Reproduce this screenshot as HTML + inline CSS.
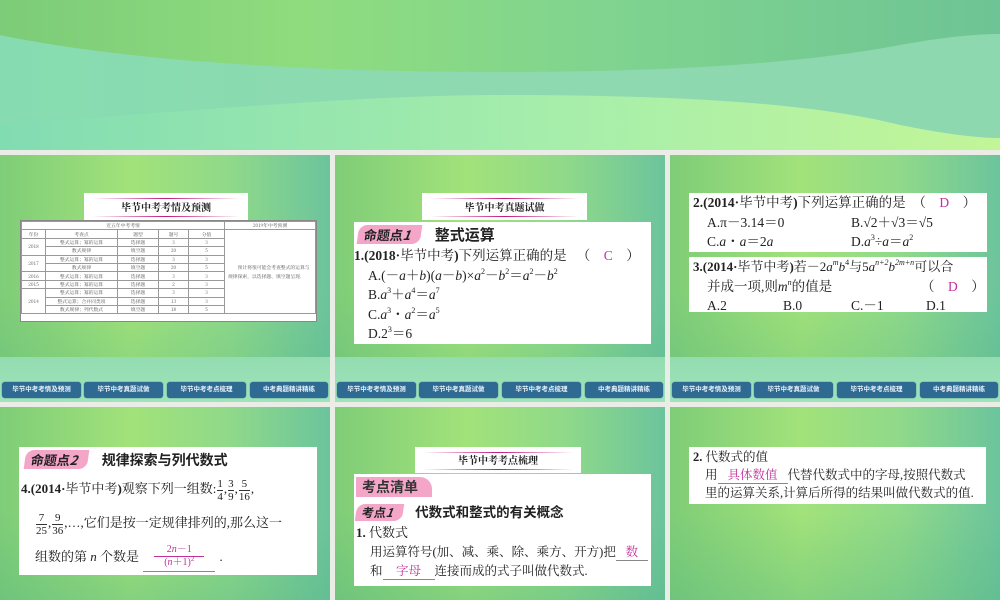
<!DOCTYPE html>
<html><head><meta charset="utf-8"><style>
*{margin:0;padding:0;box-sizing:border-box}
body{width:1000px;height:600px;overflow:hidden;background:#e9ede6;position:relative;font-family:"Liberation Serif","Noto Serif CJK SC",serif;color:#222}
.top{position:absolute;left:0;top:0;width:1000px;height:150px;overflow:hidden;background:linear-gradient(90deg,#7ccb78,#8fdc7e 30%,#80d48f 60%,#6ec494)}
.s{position:absolute;overflow:hidden;background:linear-gradient(90deg,#7fcd78 0%,#a2e27a 40%,#8fd98a 70%,#6cc49c 100%)}
.s::after{content:"";position:absolute;left:0;right:0;bottom:0;height:45%;background:linear-gradient(180deg,rgba(90,190,130,0),rgba(80,180,130,.35))}
.band{position:absolute;left:0;right:0;bottom:0;height:45px;background:linear-gradient(180deg,#93dcb0,#9fe3bc);z-index:1}
.nav{position:absolute;bottom:4px;height:16px;background:#2e6a92;border-radius:3px;color:#e8f2fa;font:bold 6.5px "Liberation Sans","Noto Sans CJK SC",sans-serif;text-align:center;line-height:16px;z-index:2;box-shadow:0 0 1px #1c4a6a}
.w{position:absolute;background:#fff;z-index:2}
.hd{position:absolute;background:#fff;z-index:2;text-align:center;font:bold 10px "Noto Serif CJK SC",serif;border-top:2px solid #fff}
.hd::before,.hd::after{content:"";position:absolute;left:8px;right:8px;height:1px;background:linear-gradient(90deg,transparent,#c2187a,transparent)}
.hd::before{top:3px}.hd::after{bottom:3px}
.tag{display:inline-block;background:#f3a6c8;color:#222;font:bold 13px "Noto Sans CJK SC",sans-serif;padding:0 10px 0 6px;border-radius:8px 0 8px 0;transform:skewX(-8deg)}
.t{font-size:13.5px;line-height:19.5px;white-space:nowrap;position:relative}
.p{color:#c0309a}
table{border-collapse:collapse;font-size:4.8px;font-family:"Noto Serif CJK SC",serif;color:#555;width:100%}
td{border:1px solid #999;text-align:center;height:8.4px;line-height:7px;padding:0}
sup{font-size:8px;line-height:0;vertical-align:6px}
.fr{display:inline-block;vertical-align:middle;text-align:center;font-size:11px;line-height:12px;margin:0 1px}
.fr span{display:block;border-top:1px solid #333}
</style></head><body>
<div class="top">
<svg width="1000" height="150" style="position:absolute;left:0;top:0">
<defs><linearGradient id="g1" x1="0" x2="1"><stop offset="0" stop-color="#86dcb0"/><stop offset=".5" stop-color="#8fd9b0"/><stop offset="1" stop-color="#8ed8b0"/></linearGradient>
<linearGradient id="g2" x1="0" x2="1"><stop offset="0" stop-color="#82dcb2"/><stop offset=".6" stop-color="#a9efaa"/><stop offset="1" stop-color="#c2f598"/></linearGradient></defs>
<path d="M0 35 C120 60 300 72 500 72 C700 72 820 60 900 45 C950 36 980 34 1000 34 L1000 150 L0 150Z" fill="url(#g1)"/>
<path d="M0 124 C150 115 350 95 500 95 C700 95 820 105 900 125 C950 135 980 138 1000 138 L1000 150 L0 150Z" fill="url(#g2)"/>
</svg></div>

<!-- slide 1 -->
<div class="s" style="left:0;top:155px;width:330px;height:247px">
<div class="band"></div>
<div class="hd" style="left:84px;top:38px;width:164px;height:27px;line-height:23px">毕节中考考情及预测</div>
<div class="w" style="left:20px;top:65px;width:297px;height:102px;border:1px solid #888">
<table>
<tr><td colspan="5">近五年中考考情</td><td>2019年中考预测</td></tr>
<tr><td style="width:24px">年份</td><td style="width:72px">考查点</td><td style="width:41px">题型</td><td style="width:30px">题号</td><td style="width:36px">分值</td><td rowspan="10" style="text-align:left;padding:0 3px;line-height:9px">　　预计将很可能会考查整式的运算与规律探索，以选择题、填空题呈现.</td></tr>
<tr><td rowspan="2">2018</td><td>整式运算；幂的运算</td><td>选择题</td><td>3</td><td>3</td></tr>
<tr><td>数式规律</td><td>填空题</td><td>20</td><td>5</td></tr>
<tr><td rowspan="2">2017</td><td>整式运算；幂的运算</td><td>选择题</td><td>3</td><td>3</td></tr>
<tr><td>数式规律</td><td>填空题</td><td>20</td><td>5</td></tr>
<tr><td>2016</td><td>整式运算；幂的运算</td><td>选择题</td><td>3</td><td>3</td></tr>
<tr><td>2015</td><td>整式运算；幂的运算</td><td>选择题</td><td>2</td><td>3</td></tr>
<tr><td rowspan="3">2014</td><td>整式运算；幂的运算</td><td>选择题</td><td>3</td><td>3</td></tr>
<tr><td>整式运算；合并同类项</td><td>选择题</td><td>13</td><td>3</td></tr>
<tr><td>数式规律；列代数式</td><td>填空题</td><td>18</td><td>5</td></tr>
</table></div>
<div class="nav" style="left:2px;width:79px">毕节中考考情及预测</div>
<div class="nav" style="left:84px;width:79px">毕节中考真题试做</div>
<div class="nav" style="left:167px;width:79px">毕节中考考点梳理</div>
<div class="nav" style="left:250px;width:78px">中考典题精讲精练</div>
</div>

<!-- slide 2 -->
<div class="s" style="left:335px;top:155px;width:330px;height:247px">
<div class="band"></div>
<div class="hd" style="left:87px;top:38px;width:165px;height:27px;line-height:23px">毕节中考真题试做</div>
<div class="w" style="left:19px;top:67px;width:297px;height:122px;padding:2px 0 0 0">
<div style="height:22px;white-space:nowrap"><span class="tag" style="margin-left:4px">命题点<i>1</i></span><span style="font:bold 15px 'Noto Sans CJK SC',sans-serif;margin-left:14px">整式运算</span></div>
<div class="t"><b>1.(2018·</b>毕节中考<b>)</b>下列运算正确的是 　（　<span class="p">C</span>　）</div>
<div class="t" style="padding-left:14px">A.(－<i>a</i>＋<i>b</i>)(<i>a</i>－<i>b</i>)×<i>a</i><sup>2</sup>－<i>b</i><sup>2</sup>＝<i>a</i><sup>2</sup>－<i>b</i><sup>2</sup></div>
<div class="t" style="padding-left:14px">B.<i>a</i><sup>3</sup>＋<i>a</i><sup>4</sup>＝<i>a</i><sup>7</sup></div>
<div class="t" style="padding-left:14px">C.<i>a</i><sup>3</sup>・<i>a</i><sup>2</sup>＝<i>a</i><sup>5</sup></div>
<div class="t" style="padding-left:14px">D.2<sup>3</sup>＝6</div>
</div>
<div class="nav" style="left:2px;width:79px">毕节中考考情及预测</div>
<div class="nav" style="left:84px;width:79px">毕节中考真题试做</div>
<div class="nav" style="left:167px;width:79px">毕节中考考点梳理</div>
<div class="nav" style="left:250px;width:78px">中考典题精讲精练</div>
</div>

<!-- slide 3 -->
<div class="s" style="left:670px;top:155px;width:330px;height:247px">
<div class="band"></div>
<div class="w" style="left:19px;top:38px;width:298px;height:59px;padding:0 0 0 4px">
<div class="t"><b>2.(2014·</b>毕节中考<b>)</b>下列运算正确的是　（　<span class="p">D</span>　）</div>
<div class="t" style="padding-left:14px">A.π－3.14＝0<span style="position:absolute;left:158px">B.√2＋√3＝√5</span></div>
<div class="t" style="padding-left:14px">C.<i>a</i>・<i>a</i>＝2<i>a</i><span style="position:absolute;left:158px">D.<i>a</i><sup>3</sup>÷<i>a</i>＝<i>a</i><sup>2</sup></span></div>
</div>
<div class="w" style="left:19px;top:102px;width:298px;height:55px;padding:0 0 0 4px">
<div class="t" style="font-size:13px"><b>3.(2014·</b>毕节中考<b>)</b>若－2<i>a<sup>m</sup>b</i><sup>4</sup>与5<i>a<sup>n+2</sup>b<sup>2m+n</sup></i>可以合</div>
<div class="t" style="padding-left:14px">并成一项,则<i>m<sup>n</sup></i>的值是<span style="position:absolute;left:228px">（　<span class="p">D</span>　）</span></div>
<div class="t" style="padding-left:14px">A.2<span style="position:absolute;left:90px">B.0</span><span style="position:absolute;left:158px">C.－1</span><span style="position:absolute;left:233px">D.1</span></div>
</div>
<div class="nav" style="left:2px;width:79px">毕节中考考情及预测</div>
<div class="nav" style="left:84px;width:79px">毕节中考真题试做</div>
<div class="nav" style="left:167px;width:79px">毕节中考考点梳理</div>
<div class="nav" style="left:250px;width:78px">中考典题精讲精练</div>
</div>

<!-- slide 4 -->
<div class="s" style="left:0;top:407px;width:330px;height:193px">
<div class="w" style="left:19px;top:40px;width:298px;height:128px;padding:3px 0 0 2px">
<div style="height:22px;white-space:nowrap"><span class="tag" style="margin-left:4px">命题点<i>2</i></span><span style="font:bold 14px 'Noto Sans CJK SC',sans-serif;margin-left:14px">规律探索与列代数式</span></div>
<div class="t" style="height:34px;line-height:34px;font-size:13px"><b>4.(2014·</b>毕节中考<b>)</b>观察下列一组数:<span class="fr">1<span>4</span></span>,<span class="fr">3<span>9</span></span>,<span class="fr">5<span>16</span></span>,</div>
<div class="t" style="height:34px;line-height:34px;padding-left:14px;font-size:13px"><span class="fr">7<span>25</span></span>,<span class="fr">9<span>36</span></span>,…,它们是按一定规律排列的,那么这一</div>
<div class="t" style="height:34px;line-height:34px;padding-left:14px;font-size:13px">组数的第 <i>n</i> 个数是 <span class="fr p" style="width:72px;font-size:10px;border-bottom:1px solid #888;padding-bottom:2px">2<i>n</i>－1<span style="border-color:#c0309a;width:50px;margin:0 auto">(<i>n</i>＋1)<sup style="font-size:7px;vertical-align:4px">2</sup></span></span> .</div>
</div>
</div>

<!-- slide 5 -->
<div class="s" style="left:335px;top:407px;width:330px;height:193px">
<div class="hd" style="left:80px;top:40px;width:166px;height:26px;line-height:22px">毕节中考考点梳理</div>
<div class="w" style="left:19px;top:67px;width:297px;height:112px;padding:3px 0 0 2px">
<div style="height:22px"><span style="display:inline-block;background:#f3a6c8;font:bold 14px 'Noto Sans CJK SC',sans-serif;padding:0 14px 0 6px;border-radius:0 12px 0 0;color:#333">考点清单</span></div>
<div style="height:24px;white-space:nowrap;padding-top:2px"><span class="tag" style="font-size:12px">考点<i>1</i></span><span style="font:bold 13.5px 'Noto Sans CJK SC',sans-serif;margin-left:12px">代数式和整式的有关概念</span></div>
<div class="t" style="font-size:13px"><b>1.</b> 代数式</div>
<div class="t" style="padding-left:14px;font-size:12.5px">用运算符号(加、减、乘、除、乘方、开方)把<span class="p" style="display:inline-block;width:32px;text-align:center;border-bottom:1px solid #888;line-height:16px">数</span></div>
<div class="t" style="padding-left:14px;font-size:12.5px">和<span class="p" style="display:inline-block;width:52px;text-align:center;border-bottom:1px solid #888;line-height:16px">字母</span>连接而成的式子叫做代数式.</div>
</div>
</div>

<!-- slide 6 -->
<div class="s" style="left:670px;top:407px;width:330px;height:193px">
<div class="w" style="left:19px;top:40px;width:297px;height:57px;padding:1px 0 0 4px">
<div class="t" style="font-size:12.5px;line-height:18px"><b>2.</b> 代数式的值</div>
<div class="t" style="padding-left:12px;font-size:12.5px;line-height:18px">用<span class="p" style="display:inline-block;width:70px;text-align:center;border-bottom:1px solid #888;line-height:15px">具体数值</span>代替代数式中的字母,按照代数式</div>
<div class="t" style="padding-left:12px;font-size:12.5px;line-height:18px">里的运算关系,计算后所得的结果叫做代数式的值.</div>
</div>
</div>
</body></html>
